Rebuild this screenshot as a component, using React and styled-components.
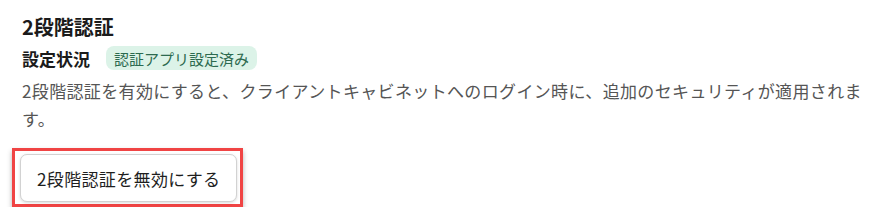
import styled, { createGlobalStyle } from "styled-components"

const Global = createGlobalStyle`
    body {
        margin: 0;
        background: #ffffff;
        font-family: "Noto Sans CJK JP", "Noto Sans", sans-serif;
    }
`

const App = () => {
    return (
        <>
            <Global />
            <Section>
                <Title>2段階認証</Title>
                <StatusRow>
                    <Label>設定状況</Label>
                    <Badge>認証アプリ設定済み</Badge>
                </StatusRow>
                <Desc>
                    2段階認証を有効にすると、クライアントキャビネットへのログイン時に、追加のセキュリティが適用されます。
                </Desc>
                <Highlight>
                    <Button>2段階認証を無効にする</Button>
                </Highlight>
            </Section>
        </>
    )
}

export default App;

const Section = styled.section`
    padding: 13px 8px 0 22px;
    display: flex;
    flex-direction: column;
    align-items: flex-start;
`

const Title = styled.h2`
    margin: 0;
    font-size: 20px;
    line-height: 28px;
    font-weight: 700;
    color: #1b1b1b;
`

const StatusRow = styled.div`
    display: flex;
    align-items: center;
    gap: 16px;
    margin-top: 5px;
    height: 24px;
`

const Label = styled.span`
    font-size: 17px;
    font-weight: 700;
    color: #1b1b1b;
`

const Badge = styled.span`
    display: inline-flex;
    align-items: center;
    height: 24px;
    padding: 0 8px;
    border-radius: 8px;
    background: #dcf3e8;
    color: #2c6a4f;
    font-size: 15px;
`

const Desc = styled.p`
    margin: 7px 0 0;
    font-size: 17px;
    letter-spacing: 0.35px;
    line-height: 28px;
    color: #555555;
`

const Highlight = styled.div`
    margin: 15px 0 0 -10px;
    border: 3px solid #f04444;
    padding: 3px 3px 2px 5px;
    box-shadow: 0 3px 5px rgba(0, 0, 0, 0.3);
`

const Button = styled.button`
    display: block;
    height: 48px;
    padding: 0 16px;
    border: 1px solid #d2d2d2;
    border-radius: 7px;
    background: #ffffff;
    box-shadow: 0 1px 3px rgba(0, 0, 0, 0.15);
    font-family: "Noto Sans CJK JP", "Noto Sans", sans-serif;
    font-size: 17px;
    letter-spacing: 0.35px;
    color: #1e1e1e;
`
